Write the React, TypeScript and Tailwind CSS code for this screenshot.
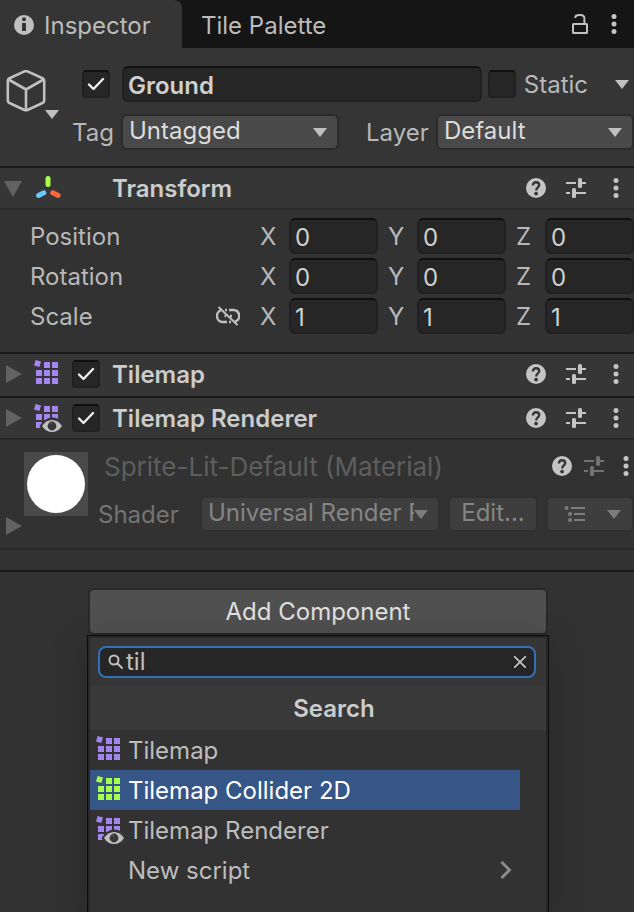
import type { ReactNode } from "react";

const fieldClass =
  "min-w-0 rounded-[6px] border-2 border-[#202020] border-t-[#101010] bg-[#262626] pt-0.5 text-[24px] text-[#cfcfcf] outline-none";
const iconClass = "block shrink-0";

function InfoIcon() {
  return (
    <svg className={iconClass} width="20" height="20" viewBox="0 0 20 20" aria-hidden="true">
      <circle cx="10" cy="10" r="10" fill="#c0c0c0" />
      <circle cx="10" cy="4.2" r="2" fill="#353535" />
      <path d="M8 8h4v8H8z" fill="#353535" />
    </svg>
  );
}

function LockIcon() {
  return (
    <svg className={iconClass} width="20" height="22" viewBox="0 0 20 22" fill="none" stroke="#c0c0c0" strokeWidth="2" aria-hidden="true">
      <rect x="3" y="11" width="14" height="9" rx="0.5" />
      <path d="M5.2 5V4.6C5.4 2.8 7.2 2 9 2h1.5C13 2 14.4 3.400 14.400 5.500V11" />
    </svg>
  );
}

function DotsIcon() {
  return (
    <svg className={iconClass} width="8" height="20" viewBox="0 0 8 20" fill="#c4c4c4" aria-hidden="true">
      <circle cx="4" cy="2.500" r="2.500" />
      <circle cx="4" cy="10" r="2.500" />
      <circle cx="4" cy="17.500" r="2.500" />
    </svg>
  );
}

function HelpIcon() {
  return (
    <svg className={iconClass} width="20" height="20" viewBox="0 0 20 20" aria-hidden="true">
      <circle cx="10" cy="10" r="10" fill="#c4c4c4" />
      <path d="M6.900 7.400C6.900 5.300 8.200 4.200 10 4.200s3.200 1.100 3.200 2.800c0 2.300-3 2.500-3 5.400" fill="none" stroke="#363636" strokeWidth="2.400" />
      <circle cx="10.100" cy="15.600" r="1.900" fill="#363636" />
    </svg>
  );
}

function PresetIcon({ dim = false }: { dim?: boolean }) {
  return (
    <svg className={iconClass} width="20" height="20" viewBox="0 0 20 20" fill={dim ? "#727272" : "#c4c4c4"} aria-hidden="true">
      <rect x="0" y="4" width="10" height="2" />
      <rect x="12" y="0" width="4" height="10" rx="1.500" />
      <rect x="16" y="4" width="4" height="2" />
      <rect x="0" y="14" width="4" height="2" />
      <rect x="6" y="10" width="4" height="10" rx="1.500" />
      <rect x="10" y="14" width="10" height="2" />
    </svg>
  );
}

function Caret({ dim = false }: { dim?: boolean }) {
  return (
    <svg className={iconClass} width="14" height="9" viewBox="0 0 14 9" aria-hidden="true">
      <path d="M0 0h14L7 9z" fill={dim ? "#7c7c7c" : "#c0c0c0"} />
    </svg>
  );
}

function FoldoutIcon({ open = false }: { open?: boolean }) {
  return (
    <svg className={iconClass} width="20" height="20" viewBox="0 0 20 20" fill="#626262" aria-hidden="true">
      {open ? <path d="M0 3h18L9 19z" /> : <path d="M2 1l16 9-16 9z" />}
    </svg>
  );
}

function CubeIcon() {
  return (
    <svg className={iconClass} width="40" height="42" viewBox="0 0 40 42" fill="none" stroke="#c0c0c0" strokeWidth="2.600" strokeLinejoin="round" aria-hidden="true">
      <path d="M18.500 1.400Q20 .8 21.500 1.400L36.500 8.200Q38.200 9 38.200 10.800V30.500Q38.200 32.200 36.500 33L21.500 40Q20 40.600 18.500 40L3.500 33Q1.800 32.200 1.800 30.500V10.800Q1.800 9 3.500 8.200Z" />
      <path d="M2.500 9.500L20 19.500 37.500 9.500M20 19.500V40" />
    </svg>
  );
}

function TransformIcon() {
  return (
    <svg className={iconClass} width="28" height="28" viewBox="0 0 28 28" strokeWidth="5" strokeLinecap="round" aria-hidden="true">
      <path d="M14 4.500V10.500" stroke="#a8ff45" />
      <path d="M9.800 18.800L4.600 21.500" stroke="#66c8ff" />
      <path d="M18.800 18.800L24.200 21.500" stroke="#ff6738" />
    </svg>
  );
}

function TilemapIcon({ green = false, eye = false }: { green?: boolean; eye?: boolean }) {
  return (
    <svg className={`${iconClass} overflow-visible`} width="28" height="28" viewBox="0 0 28 28" aria-hidden="true">
      <g fill={green ? "#a4ff4a" : "#a486f0"}>
        <path d="M1.600 0L7 1.400 5.400 7 0 5.600z" />
        <rect x="10" y="2" width="6" height="6" />
        <rect x="18" y="2" width="6" height="6" />
        <rect x="2" y="10" width="6" height="6" />
        <rect x="10" y="10" width="6" height="6" />
        <rect x="18" y="10" width="6" height="6" />
        <rect x="2" y="18" width="6" height="6" />
        <rect x="10" y="18" width="6" height="6" />
        <rect x="18" y="18" width="6" height="6" />
      </g>
      {eye && (
        <>
          <path d="M5.500 22Q11 13.500 18 13.500T29 19V28H10Q7 26 5.500 22z" fill="#363636" />
          <path d="M8 22Q12 16 18 16t10 6q-4 6-10 6T8 22z" fill="#c0c0c0" />
          <circle cx="18" cy="22" r="4.400" fill="#363636" />
          <path d="M15.600 20.600a2.800 2.800 0 0 1 2.400-1.400" fill="none" stroke="#6a6a6a" />
        </>
      )}
    </svg>
  );
}

function UnlinkIcon() {
  return (
    <svg className={iconClass} width="24" height="20" viewBox="0 0 24 20" fill="none" stroke="#c0c0c0" strokeWidth="2.400" aria-hidden="true">
      <path d="M5.500 4.200A6 6 0 0 0 6.500 16H11M9 4h2M13 4h4.500a6 6 0 0 1 1.500 11.700M13 16h2M8.500 10h1.500M14 10h2" />
      <path d="M2.500 1L21.500 19" strokeWidth="2" />
    </svg>
  );
}

function ListIcon() {
  return (
    <svg className={iconClass} width="22" height="18" viewBox="0 0 22 18" fill="#7c7c7c" aria-hidden="true">
      <circle cx="2.500" cy="3" r="2" />
      <rect x="7" y="2" width="14" height="2" />
      <circle cx="6" cy="9" r="2" />
      <rect x="10" y="8" width="11" height="2" />
      <circle cx="6" cy="15" r="2" />
      <rect x="10" y="14" width="11" height="2" />
    </svg>
  );
}

function CheckBox({ label, checked = false }: { label: string; checked?: boolean }) {
  return (
    <span className="grid shrink-0 place-items-center">
      <input
        type="checkbox"
        aria-label={label}
        defaultChecked={checked}
        className="peer col-start-1 row-start-1 size-7 appearance-none rounded-[4px] border-2 border-[#202020] border-t-[#101010] bg-[#262626]"
      />
      <svg className="pointer-events-none invisible col-start-1 row-start-1 peer-checked:visible" width="18" height="14" viewBox="0 0 18 14" fill="none" stroke="#eeeeee" strokeWidth="2.400" strokeLinecap="round" strokeLinejoin="round" aria-hidden="true">
        <path d="M2 7.500L6.500 12 16 2" />
      </svg>
    </span>
  );
}

function DropDown({ label, options, className }: { label: string; options: string[]; className: string }) {
  return (
    <span className={`grid min-w-0 items-center ${className}`}>
      <select
        aria-label={label}
        className="col-start-1 row-start-1 h-9 w-full min-w-0 appearance-none rounded-[6px] border-2 border-[#2b2b2b] bg-[#494949] pr-7 pb-0.5 pl-[6px] text-[24px] leading-7 text-[#dcdcdc] outline-none"
      >
        {options.map((o) => (
          <option key={o}>{o}</option>
        ))}
      </select>
      <span className="pointer-events-none col-start-1 row-start-1 justify-self-end pr-3">
        <Caret />
      </span>
    </span>
  );
}

function ComponentHeader({
  title,
  icon,
  open = false,
  toggle = false,
  className,
}: {
  title: string;
  icon: ReactNode;
  open?: boolean;
  toggle?: boolean;
  className: string;
}) {
  return (
    <header className={`flex items-center border-t-2 border-[#191919] bg-[#363636] pr-[14px] pl-1 ${className}`}>
      <button aria-label={`Fold ${title}`} aria-expanded={open}>
        <FoldoutIcon open={open} />
      </button>
      <span className="ml-[10px]">{icon}</span>
      <span className="mr-3 ml-[10px] w-7">{toggle && <CheckBox label={`Enable ${title}`} checked />}</span>
      <h2 className="flex-1 pt-0.5 text-[24px] leading-7 font-semibold text-[#cccccc]">{title}</h2>
      <div className="flex items-center">
        <button aria-label={`${title} help`}>
          <HelpIcon />
        </button>
        <button aria-label={`${title} presets`} className="ml-5">
          <PresetIcon />
        </button>
        <button aria-label={`${title} menu`} className="ml-[26px]">
          <DotsIcon />
        </button>
      </div>
    </header>
  );
}

function VectorRow({ name, value, linked = false }: { name: string; value: string; linked?: boolean }) {
  return (
    <div className="flex items-center pl-[30px]">
      <div className="flex w-[230px] shrink-0 items-center justify-between pr-5">
        <span className="pt-0.5">{name}</span>
        {linked && (
          <button aria-label="Constrain proportions">
            <UnlinkIcon />
          </button>
        )}
      </div>
      <div className="grid flex-1 grid-cols-3 gap-[10px]">
        {["X", "Y", "Z"].map((axis) => (
          <label key={axis} className="flex items-center">
            <span className="w-[29px] shrink-0 pt-0.5">{axis}</span>
            <input aria-label={`${name} ${axis}`} defaultValue={value} className={`h-9 w-full px-1 ${fieldClass}`} />
          </label>
        ))}
      </div>
    </div>
  );
}

function MenuItem({ label, icon, selected = false }: { label: string; icon?: ReactNode; selected?: boolean }) {
  return (
    <li>
      <button
        className={`flex h-10 w-full items-center pl-[6px] text-left ${selected ? "bg-[#355686] text-white" : "text-[#bdbdbd]"}`}
      >
        <span className="mr-1 w-7">{icon}</span>
        <span className="flex-1 pt-0.5">{label}</span>
        {!icon && (
          <svg className="mr-2" width="12" height="18" viewBox="0 0 12 18" fill="none" stroke="#8c8c8c" strokeWidth="3" aria-hidden="true">
            <path d="M1.500 1L9.500 9l-8 8" />
          </svg>
        )}
      </button>
    </li>
  );
}

export default function App() {
  return (
    <main className="flex min-h-screen flex-col overflow-hidden bg-[#323232] font-['Inter',sans-serif] text-[24px] leading-7 text-[#b8b8b8]">
      <nav className="flex h-12 items-stretch bg-[#151515]">
        <button className="flex w-[182px] items-center gap-[10px] rounded-tr-[8px] bg-[#353535] pt-0.5 pl-[14px] text-[#bcbcbc]">
          <InfoIcon />
          <span className="pt-0.5">Inspector</span>
        </button>
        <button className="pt-1 pl-[19px] text-[#bcbcbc]">Tile Palette</button>
        <div className="ml-auto flex items-center gap-5 pr-4">
          <button aria-label="Lock">
            <LockIcon />
          </button>
          <button aria-label="Tab menu">
            <DotsIcon />
          </button>
        </div>
      </nav>

      <section className="flex h-[118px] bg-[#353535] pt-[18px]">
        <button aria-label="Object icon" className="flex w-[72px] shrink-0 items-start pt-1 pl-[6px]">
          <CubeIcon />
          <span className="-ml-px mt-10">
            <Caret />
          </span>
        </button>
        <div className="flex min-w-0 flex-1 flex-col gap-3">
          <div className="flex h-9 items-center pl-[10px]">
            <CheckBox label="Active" checked />
            <input aria-label="Name" defaultValue="Ground" className={`ml-3 h-9 flex-1 px-1 font-semibold ${fieldClass}`} />
            <label className="ml-[6px] flex items-center gap-2">
              <CheckBox label="Static" />
              <span className="pt-0.5">Static</span>
            </label>
            <button aria-label="Static options" className="mr-[5px] ml-[27px]">
              <Caret />
            </button>
          </div>
          <div className="flex h-9 items-center">
            <span className="w-[49px] shrink-0 pt-0.5">Tag</span>
            <DropDown label="Tag" options={["Untagged"]} className="flex-[218]" />
            <span className="w-[97px] shrink-0 pt-0.5 pl-[27px]">Layer</span>
            <DropDown label="Layer" options={["Default"]} className="flex-[198]" />
          </div>
        </div>
      </section>

      <section>
        <ComponentHeader title="Transform" icon={<TransformIcon />} open className="h-[42px]" />
        <div className="flex flex-col gap-1 border-t-2 border-[#2a2a2a] pt-2 pb-[18px]">
          <VectorRow name="Position" value="0" />
          <VectorRow name="Rotation" value="0" />
          <VectorRow name="Scale" value="1" linked />
        </div>
      </section>

      <ComponentHeader title="Tilemap" icon={<TilemapIcon />} toggle className="h-11 pb-0.5" />
      <ComponentHeader title="Tilemap Renderer" icon={<TilemapIcon eye />} toggle className="h-[42px]" />

      <section className="flex h-[112px] border-y-2 border-[#282828]">
        <div className="w-[88px] shrink-0 pt-3">
          <div className="ml-6 grid size-16 place-items-center bg-[#4a4a4a]">
            <div className="size-[58px] rounded-full bg-white" />
          </div>
          <button aria-label="Fold material" className="ml-1 block">
            <FoldoutIcon />
          </button>
        </div>
        <div className="min-w-0 flex-1 pt-3 pl-[10px]">
          <div className="flex h-7 items-center pr-1 pl-[6px]">
            <h3 className="flex-1 pt-0.5 text-[26px] text-[#5e5e5e]">Sprite-Lit-Default (Material)</h3>
            <button aria-label="Material help">
              <HelpIcon />
            </button>
            <button aria-label="Material presets" disabled className="ml-3">
              <PresetIcon dim />
            </button>
            <button aria-label="Material menu" className="ml-[18px]">
              <DotsIcon />
            </button>
          </div>
          <div className="mt-4 flex h-9 items-center text-[#747474]">
            <label htmlFor="shader" className="w-[102px] shrink-0 pt-0.5">
              Shader
            </label>
            <span className="grid min-w-0 flex-1 items-center">
              <select
                id="shader"
                disabled
                className="col-start-1 row-start-1 h-9 w-full min-w-0 appearance-none rounded-[6px] border-2 border-[#303030] bg-[#3e3e3e] pr-6 pb-0.5 pl-[6px] text-[24px] leading-7 text-[#858585] opacity-100"
              >
                <option>Universal Render Pipeline/2D/Sprite-Lit-Default</option>
              </select>
              <span className="pointer-events-none col-start-1 row-start-1 justify-self-end pr-3">
                <Caret dim />
              </span>
            </span>
            <button disabled className="ml-2 h-9 w-[90px] rounded-[6px] border-2 border-[#303030] bg-[#3e3e3e] pb-0.5 text-[#858585]">
              Edit...
            </button>
            <button disabled aria-label="Shader list" className="ml-2 flex h-9 w-[88px] items-center justify-between rounded-[6px] border-2 border-[#303030] bg-[#3e3e3e] pr-[11px] pl-4">
              <ListIcon />
              <Caret dim />
            </button>
          </div>
        </div>
      </section>

      <section className="mt-5 flex flex-1 flex-col border-t-2 border-[#191919] pt-4 pr-[85px] pl-[87px]">
        <button className="mx-px h-[47px] shrink-0 rounded-[6px] border-2 border-[#292929] bg-[#505050] text-[#e0e0e0]">
          Add Component
        </button>
        <div className="flex flex-1 flex-col border border-b-0 border-[#0c0c0c] bg-[#323232] shadow-[0_8px_32px_#00000040]">
          <div className="flex flex-1 flex-col border-x-2 border-t-2 border-[#272727]">
            <div className="bg-[#363636] py-2 pr-[10px] pl-2">
              <div className="flex h-8 items-center rounded-[8px] border-2 border-[#3370b8] bg-[#262626] pr-2 pl-2">
                <svg className={iconClass} width="16" height="16" viewBox="0 0 16 16" fill="none" stroke="#c0c0c0" strokeWidth="2" strokeLinecap="round" aria-hidden="true">
                  <circle cx="6" cy="6" r="4.500" />
                  <path d="M9.500 9.500L14 14" />
                </svg>
                <input
                  aria-label="Search components"
                  defaultValue="til"
                  className="ml-[2px] h-7 min-w-0 flex-1 bg-transparent text-[24px] text-[#c0c0c0] outline-none"
                />
                <button aria-label="Clear search">
                  <svg className={iconClass} width="12" height="12" viewBox="0 0 12 12" fill="none" stroke="#c8c8c8" strokeWidth="1.600" aria-hidden="true">
                    <path d="M0 0l12 12M12 0L0 12" />
                  </svg>
                </button>
              </div>
            </div>
            <h2 className="bg-[#393939] pt-[9px] pb-[7px] pl-8 text-center font-semibold text-[#cccccc]">Search</h2>
            <ul className="pr-[26px]">
              <MenuItem label="Tilemap" icon={<TilemapIcon />} />
              <MenuItem label="Tilemap Collider 2D" icon={<TilemapIcon green />} selected />
              <MenuItem label="Tilemap Renderer" icon={<TilemapIcon eye />} />
              <MenuItem label="New script" />
            </ul>
          </div>
        </div>
      </section>
    </main>
  );
}
